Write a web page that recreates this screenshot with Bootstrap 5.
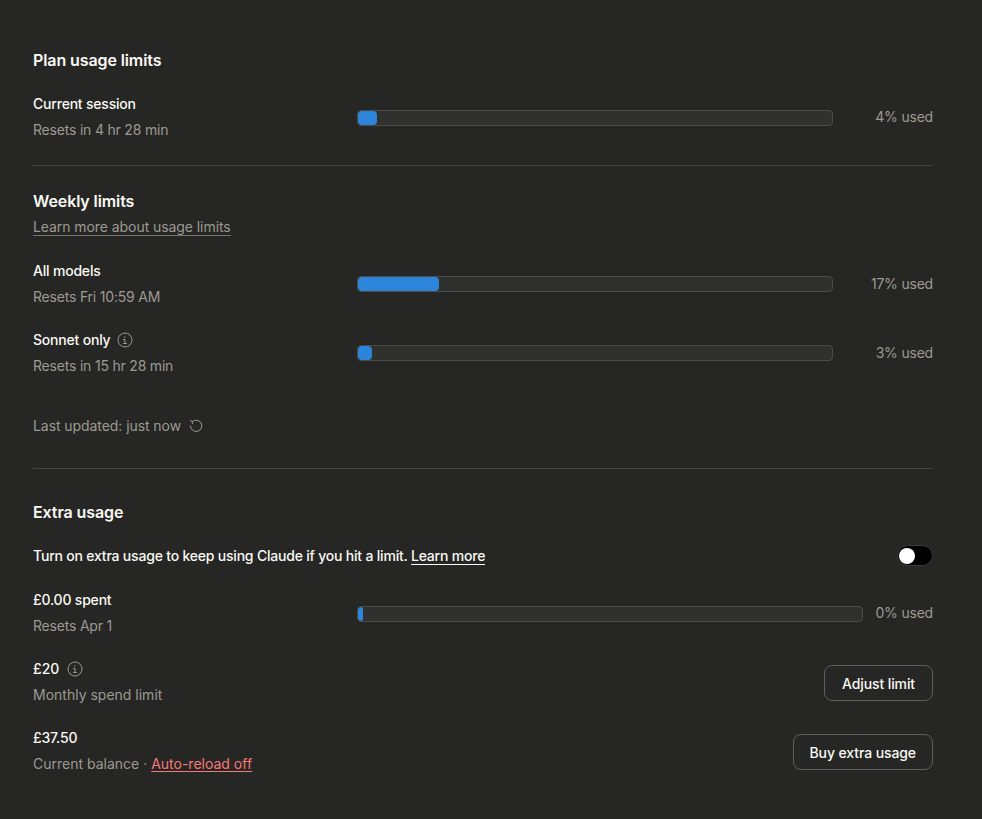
<!DOCTYPE html>
<html lang="en">
<head>
  <meta charset="UTF-8">
  <meta name="viewport" content="width=device-width, initial-scale=1.0">
  <title>Usage</title>
  <link href="https://cdn.jsdelivr.net/npm/bootstrap@5.3.0/dist/css/bootstrap.min.css" rel="stylesheet">
  <style>
    body {
      background-color: #262624;
      color: #faf9f5;
      font-family: "Inter", "Liberation Sans", sans-serif;
      font-size: 14px;
      line-height: 20px;
      letter-spacing: -0.2px;
    }
    .page-wrap { padding: 48px 49px 0 33px; }
    .sec-title { font-size: 16px; line-height: 24px; font-weight: 600; margin: 0; letter-spacing: -0.1px; }
    .muted-text { color: #9c9a92; }
    .sec-line { border-top: 1px solid #45453f; margin: 0; opacity: 1; }
    .gap-4px { margin-top: 4px; }
    .gap-22 { margin-top: 22px; }
    .gap-23 { margin-top: 23px; }
    .gap-24 { margin-top: 24px; }
    .gap-25 { margin-top: 25px; }
    .gap-31 { margin-top: 31px; }
    .gap-32 { margin-top: 32px; }
    .gap-40 { margin-top: 40px; }
    .flat-text { letter-spacing: 0; }
    .tight-text { letter-spacing: -0.07px; }
    .usage-row { display: flex; align-items: center; }
    .label-col { width: 324px; flex-shrink: 0; }
    .label-main { font-weight: 500; display: flex; align-items: center; gap: 7px; }
    .label-wide { gap: 8px; }
    .label-sub { color: #9c9a92; margin-top: 6px; }
    .bar-track {
      flex-grow: 1;
      height: 16px;
      background-color: #30302e;
      border: 1px solid #4b4b46;
      border-radius: 4px;
      overflow: hidden;
    }
    .bar-low { margin-top: 2px; }
    .bar-fill { height: 100%; background-color: #2c84db; border-radius: 4px; }
    .used-col { width: 100px; flex-shrink: 0; text-align: right; color: #9c9a92; }
    .used-short { width: 70px; }
    .link-muted { color: #9c9a92; text-decoration: none; border-bottom: 1px solid #77756e; }
    .link-plain { color: #faf9f5; text-decoration: none; border-bottom: 1px solid #faf9f5; }
    .link-red { color: #f87878; text-decoration: underline; text-underline-offset: 2px; }
    .toggle-off {
      width: 36px; height: 21px; margin-top: -1px; background-color: #000; border-radius: 11px;
      border: 1px solid #3a3a37; display: flex; align-items: center; padding-left: 1px;
    }
    .toggle-knob { width: 16px; height: 16px; background-color: #fff; border-radius: 50%; }
    .btn-outline {
      background: transparent; color: #faf9f5; border: 1px solid #5f5e59;
      border-radius: 8px; height: 36px; min-width: 109px; margin-top: 2px; padding: 0 16px;
      font-size: 14px; font-weight: 500; letter-spacing: -0.1px;
    }
    .btn-outline:hover { color: #fff; border-color: #77756e; }
    .info-icon { width: 16px; height: 16px; color: #9c9a92; }
  </style>
</head>
<body>
<div class="page-wrap">
  <section>
    <h2 class="sec-title">Plan usage limits</h2>
    <div class="usage-row gap-22">
      <div class="label-col">
        <div class="label-main">Current session</div>
        <div class="label-sub">Resets in 4 hr 28 min</div>
      </div>
      <div class="bar-track bar-low"><div class="bar-fill" style="width: 4%"></div></div>
      <div class="used-col">4% used</div>
    </div>
  </section>
  <hr class="sec-line gap-25">

  <section class="gap-23">
    <h2 class="sec-title">Weekly limits</h2>
    <div class="gap-4px"><a class="link-muted tight-text" href="#">Learn more about usage limits</a></div>
    <div class="usage-row gap-24">
      <div class="label-col">
        <div class="label-main">All models</div>
        <div class="label-sub">Resets Fri 10:59 AM</div>
      </div>
      <div class="bar-track"><div class="bar-fill" style="width: 17%"></div></div>
      <div class="used-col">17% used</div>
    </div>
    <div class="usage-row gap-23">
      <div class="label-col">
        <div class="label-main">Sonnet only
          <svg class="info-icon" viewBox="0 0 16 16" fill="none" stroke="currentColor" stroke-width="1"><circle cx="8" cy="8" r="7"/><path d="M6.5 7.5H8V11.5M6.5 11.5H9.5" stroke-linecap="round"/><circle cx="7.8" cy="5" r=".7" fill="currentColor" stroke="none"/></svg>
        </div>
        <div class="label-sub">Resets in 15 hr 28 min</div>
      </div>
      <div class="bar-track"><div class="bar-fill" style="width: 3%"></div></div>
      <div class="used-col">3% used</div>
    </div>
    <div class="muted-text tight-text d-flex align-items-center gap-2 gap-40">
      Last updated: just now
      <svg width="14" height="14" viewBox="0 0 14 14" fill="none" stroke="currentColor" stroke-width="1"><path d="M3.2 2.6A5.7 5.7 0 1 1 1.4 7" stroke-linecap="round"/><path d="M1.6 1.6 3.2 2.6 3.4 4.5" stroke-linecap="round"/></svg>
    </div>
  </section>
  <hr class="sec-line gap-32">

  <section class="gap-31">
    <h2 class="sec-title">Extra usage</h2>
    <div class="d-flex justify-content-between align-items-start gap-22">
      <div class="label-main d-block">Turn on extra usage to keep using Claude if you hit a limit. <a class="link-plain" href="#">Learn more</a></div>
      <div class="toggle-off"><div class="toggle-knob"></div></div>
    </div>
    <div class="usage-row gap-24">
      <div class="label-col">
        <div class="label-main">£0.00 spent</div>
        <div class="label-sub">Resets Apr 1</div>
      </div>
      <div class="bar-track bar-low"><div class="bar-fill" style="width: 1%"></div></div>
      <div class="used-col used-short">0% used</div>
    </div>
    <div class="d-flex justify-content-between align-items-center gap-23">
      <div>
        <div class="label-main label-wide flat-text">£20
          <svg class="info-icon" viewBox="0 0 16 16" fill="none" stroke="currentColor" stroke-width="1"><circle cx="8" cy="8" r="7"/><path d="M6.5 7.5H8V11.5M6.5 11.5H9.5" stroke-linecap="round"/><circle cx="7.8" cy="5" r=".7" fill="currentColor" stroke="none"/></svg>
        </div>
        <div class="label-sub flat-text">Monthly spend limit</div>
      </div>
      <button class="btn btn-outline" type="button">Adjust limit</button>
    </div>
    <div class="d-flex justify-content-between align-items-center gap-23">
      <div>
        <div class="label-main">£37.50</div>
        <div class="label-sub flat-text">Current balance · <a class="link-red" href="#">Auto-reload off</a></div>
      </div>
      <button class="btn btn-outline" type="button">Buy extra usage</button>
    </div>
  </section>
</div>
<script src="https://cdn.jsdelivr.net/npm/bootstrap@5.3.0/dist/js/bootstrap.bundle.min.js"></script>
</body>
</html>
